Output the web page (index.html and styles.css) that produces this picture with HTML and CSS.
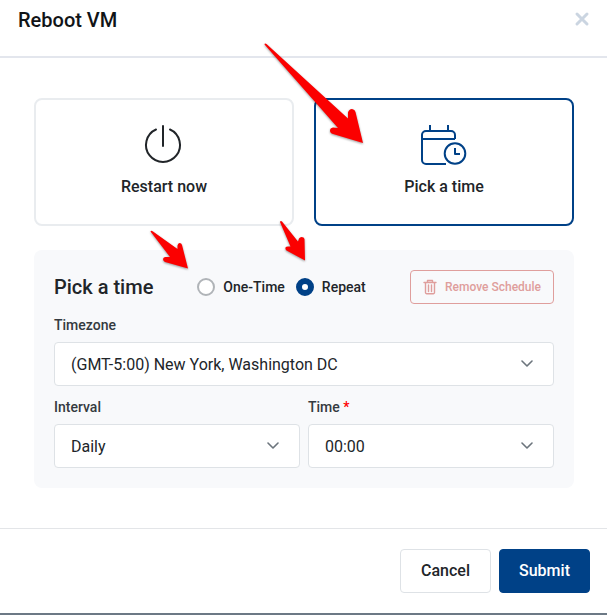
FILE: index.html
```html
<!DOCTYPE html>
<html lang="en">
<head>
    <meta charset="UTF-8">
    <meta name="viewport" content="width=device-width, initial-scale=1.0">
    <title>Reboot VM</title>
    <link rel="stylesheet" href="styles.css">
</head>
<body>
    <form class="modal">
        <header class="modal-header">
            <h1 class="title">Reboot VM</h1>
            <button type="button" class="close" aria-label="Close">
                <svg width="16" height="16" viewBox="0 0 16 16"><path d="M3 3l10 10M13 3L3 13"/></svg>
            </button>
        </header>

        <div class="modal-body">
            <div class="choices">
                <button type="button" class="choice">
                    <svg width="48" height="48" viewBox="0 0 48 48">
                        <path d="M23 6v20M16 9.500a17 17 0 1 0 14 0"/>
                    </svg>
                    Restart now
                </button>
                <button type="button" class="choice selected">
                    <svg width="48" height="48" viewBox="0 0 48 48">
                        <path d="M10 5v6M28 5v6M35 19V15a4 4 0 0 0-4-4H6a4 4 0 0 0-4 4v25a4 4 0 0 0 4 4h20M2 19h33"/>
                        <circle cx="35" cy="33.500" r="10.300"/>
                        <path d="M35 28v6h5"/>
                    </svg>
                    Pick a time
                </button>
            </div>

            <section class="schedule">
                <div class="schedule-top">
                    <h2 class="title">Pick a time</h2>
                    <div class="radios">
                        <label class="radio"><input type="radio" name="frequency" value="once">One-Time</label>
                        <label class="radio"><input type="radio" name="frequency" value="repeat" checked>Repeat</label>
                    </div>
                    <button type="button" class="remove">
                        <svg width="14" height="16" viewBox="0 0 14 16">
                            <path d="M1 3.500h12M4.500 3V1.500h5V3M2.500 4v9.500a1.200 1.200 0 0 0 1.200 1.200h6.600a1.200 1.200 0 0 0 1.200-1.200V4M5.500 6v6.500M8.500 6v6.500"/>
                        </svg>
                        Remove Schedule
                    </button>
                </div>

                <div class="fields">
                    <div class="field wide">
                        <label for="timezone">Timezone</label>
                        <div class="select">
                            <select id="timezone"><option>(GMT-5:00) New York, Washington DC</option></select>
                            <svg width="12" height="8" viewBox="0 0 12 8"><path d="M1 1l5 5 5-5"/></svg>
                        </div>
                    </div>
                    <div class="field">
                        <label for="interval">Interval</label>
                        <div class="select">
                            <select id="interval"><option>Daily</option></select>
                            <svg width="12" height="8" viewBox="0 0 12 8"><path d="M1 1l5 5 5-5"/></svg>
                        </div>
                    </div>
                    <div class="field">
                        <label for="time">Time <span class="required">*</span></label>
                        <div class="select">
                            <select id="time" required><option>00:00</option></select>
                            <svg width="12" height="8" viewBox="0 0 12 8"><path d="M1 1l5 5 5-5"/></svg>
                        </div>
                    </div>
                </div>
            </section>
        </div>

        <footer class="modal-footer">
            <button type="button" class="btn">Cancel</button>
            <button type="submit" class="btn primary">Submit</button>
        </footer>
    </form>

    <!-- Pointer arrows over the options -->
    <svg class="arrows" width="607" height="300" viewBox="0 0 607 300" aria-hidden="true">
        <path d="M264.500 44.500Q264.500 43 266.500 44L348 118.500V112.500Q349 109 352 109Q355 109.500 355.500 112L363 143L333 134Q330 133 330 130.500Q330 128 333 127.500L338 128Z"/>
        <path d="M150.500 231.500Q151 230 153 231.500L177.500 249V245.500Q178 243 179.500 243Q181.500 243 182 245L188 268.500L165 262Q163 261 163 259Q163.500 257 165.500 257L170 257Z"/>
        <path d="M280 222Q280.500 220.500 282 221.500L298 241.500L299 238.500Q300 237 301.500 237Q304 237 304.500 239L305 260.500L286.500 250.500Q285 249 285.500 247.500Q286 246.500 288 246.500L290.500 246.500Z"/>
    </svg>
</body>
</html>
```
FILE: styles.css
```css
/* General Styles */
* {
    box-sizing: border-box;
}

body {
    margin: 0;
    background-color: #6c7985;
    color: #212529;
    font-family: Roboto, 'Liberation Sans', sans-serif;
    font-size: 16px;
    line-height: 24px;
}

button, select {
    font: inherit;
    color: inherit;
    cursor: pointer;
}

svg {
    fill: none;
    stroke: currentColor;
    stroke-width: 2;
    stroke-linecap: round;
    stroke-linejoin: round;
}

.modal {
    background-color: #fff;
}

.title {
    margin: 0;
    font-size: 20px;
    font-weight: 500;
    line-height: 24px;
    white-space: nowrap;
}

/* Header */
.modal-header {
    display: flex;
    justify-content: space-between;
    align-items: flex-start;
    padding: 8px 16px 24px 18px;
    border-bottom: 2px solid #e3e6ed;
    color: #111417;
}

.close {
    display: flex;
    padding: 3px 1px;
    border: none;
    background: none;
    color: #cbd5e1;
}

.close svg {
    stroke-width: 3;
}

/* Option cards */
.modal-body {
    padding: 40px 33px 40px 34px;
}

.choices {
    display: grid;
    grid-template-columns: 1fr 1fr;
    gap: 20px;
    margin-bottom: 24px;
}

.choice {
    display: flex;
    flex-direction: column;
    align-items: center;
    gap: 7px;
    padding: 20px 16px 25px;
    border: 2px solid #e9ecef;
    border-radius: 8px;
    background-color: #fff;
    font-weight: 500;
}

.choice.selected {
    border-color: #004187;
}

.choice.selected svg {
    color: #004187;
    stroke-linecap: butt;
}

/* Schedule panel */
.schedule {
    padding: 20px;
    border-radius: 8px;
    background-color: #f8f9fb;
}

.schedule-top {
    display: flex;
    align-items: center;
}

.radios {
    display: flex;
    gap: 11px;
    margin: 0 auto 0 44px;
}

.radio {
    display: flex;
    align-items: center;
    gap: 8px;
    font-size: 14px;
    font-weight: 500;
    white-space: nowrap;
}

.radio input {
    appearance: none;
    width: 18px;
    height: 18px;
    margin: 0;
    border: 2px solid #b0b4b8;
    border-radius: 50%;
    background-color: #fff;
}

.radio input:checked {
    border: 6px solid #004187;
}

.remove {
    display: flex;
    align-items: center;
    gap: 8px;
    height: 34px;
    padding: 0 12px;
    border: 1px solid #df9e9c;
    border-radius: 4px;
    background: none;
    color: #df9e9c;
    font-size: 12px;
    font-weight: 500;
    white-space: nowrap;
}

.remove svg {
    stroke-width: 1.4;
}

/* Fields */
.fields {
    display: grid;
    grid-template-columns: 1fr 1fr;
    gap: 12px 8px;
    margin-top: 12px;
}

.wide {
    grid-column: 1 / -1;
}

.field label {
    display: block;
    margin-bottom: 8px;
    color: #343a40;
    font-size: 14px;
    font-weight: 500;
    line-height: 18px;
}

.field .required {
    color: #ff0000;
}

.select {
    position: relative;
}

.select select {
    display: block;
    appearance: none;
    width: 100%;
    height: 44px;
    padding: 2px 40px 0 16px;
    border: 1px solid #dee2e6;
    border-radius: 4px;
    background-color: #fff;
}

.select svg {
    position: absolute;
    top: 18px;
    right: 21px;
    color: #6c757d;
    stroke-width: 1.6;
    pointer-events: none;
}

/* Footer */
.modal-footer {
    display: flex;
    justify-content: flex-end;
    gap: 8px;
    padding: 20px 17px 20px;
    border-top: 1px solid #e3e5e8;
}

.btn {
    min-width: 91px;
    height: 44px;
    border: 1px solid #dee2e6;
    border-radius: 4px;
    background-color: #fff;
    font-weight: 500;
}

.btn.primary {
    border-color: #004187;
    background-color: #004187;
    color: #fff;
}

/* Arrows */
.arrows {
    position: absolute;
    top: 0;
    left: 0;
    fill: #fb0000;
    stroke: none;
    pointer-events: none;
    filter: drop-shadow(0 1px 1px rgba(0, 0, 0, 0.4));
}
```
